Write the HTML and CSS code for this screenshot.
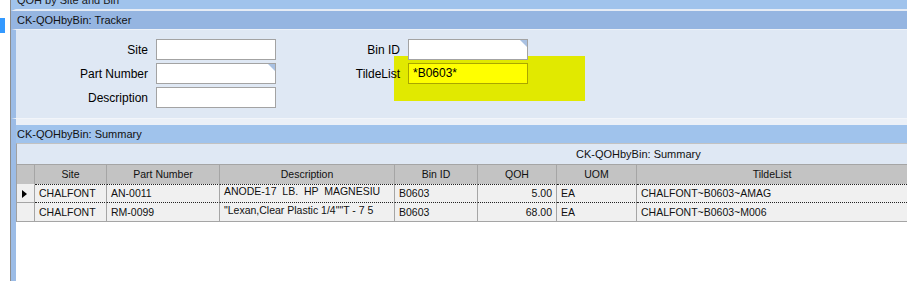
FILE: index.html
```html
<!DOCTYPE html>
<html>
<head>
<meta charset="utf-8">
<link rel="stylesheet" href="styles.css">
</head>
<body>
<div class="page">
  <div class="strip"><div class="marker"></div></div>
  <div class="window">
    <div class="titlebar"><span class="title-text">QOH by Site and Bin</span></div>
    <div class="section-head tracker-head">CK-QOHbyBin: Tracker</div>
    <div class="tracker">
      <div class="highlight"></div>
      <div class="form">
        <label class="lbl">Site</label>
        <div class="inp"></div>
        <label class="lbl">Bin ID</label>
        <div class="inp corner"></div>

        <label class="lbl">Part Number</label>
        <div class="inp corner"></div>
        <label class="lbl">TildeList</label>
        <div class="inp yellow">*B0603*</div>

        <label class="lbl">Description</label>
        <div class="inp"></div>
        <span></span>
        <span></span>
      </div>
    </div>
    <div class="band"></div>
    <div class="section-head summary-head">CK-QOHbyBin: Summary</div>
    <div class="gridwrap">
      <div class="grid-caption">CK-QOHbyBin: Summary</div>
      <div class="grid">
        <div class="hc rh"></div>
        <div class="hc">Site</div>
        <div class="hc">Part Number</div>
        <div class="hc">Description</div>
        <div class="hc">Bin ID</div>
        <div class="hc">QOH</div>
        <div class="hc">UOM</div>
        <div class="hc last">TildeList</div>

        <div class="rh sel-rh"><span class="arrow"></span></div>
        <div class="c sel">CHALFONT</div>
        <div class="c sel">AN-0011</div>
        <div class="c sel desc">ANODE-17  LB.  HP  MAGNESIU</div>
        <div class="c sel">B0603</div>
        <div class="c sel num">5.00</div>
        <div class="c sel">EA</div>
        <div class="c sel last">CHALFONT~B0603~AMAG</div>

        <div class="rh"></div>
        <div class="c">CHALFONT</div>
        <div class="c">RM-0099</div>
        <div class="c desc">"Lexan,Clear Plastic 1/4""T - 7 5</div>
        <div class="c">B0603</div>
        <div class="c num">68.00</div>
        <div class="c">EA</div>
        <div class="c last">CHALFONT~B0603~M006</div>
      </div>
    </div>
  </div>
</div>
</body>
</html>
```
FILE: styles.css
```css
html, body {
  margin: 0;
  padding: 0;
  background: #ffffff;
}
body {
  font-family: "Liberation Sans", Arial, sans-serif;
  color: #000;
  width: 907px;
  height: 281px;
  overflow: hidden;
}
.page {
  display: flex;
  height: 281px;
}
.strip {
  width: 10px;
  flex: none;
  background: #fff;
  padding-top: 18px;
  box-sizing: border-box;
}
.marker {
  width: 5px;
  height: 15px;
  background: #3399ff;
}
.window {
  flex: 1;
  border-left: 1px solid #8c8c8c;
  display: flex;
  flex-direction: column;
  position: relative;
}
.titlebar {
  height: 9px;
  background: #a0c3ec;
  overflow: hidden;
  border-left: 5px solid #a0c3ec;
  border-bottom: 2px solid #e6ecf5;
  font-size: 11px;
  line-height: 9px;
}
.title-text {
  display: block;
  margin-top: -4px;
  padding-left: 1px;
  color: #1a1a1a;
}
.section-head {
  font-size: 11px;
  color: #111;
  padding-left: 1px;
  display: flex;
  align-items: center;
}
.tracker-head {
  height: 18px;
  background: #95b5e1;
  border-left: 5px solid #95b5e1;
  border-bottom: 1px solid #edf1f7;
}
.tracker {
  position: relative;
  height: 88px;
  flex: none;
  background: #dfe8f4;
  border-left: 5px solid #9cbce6;
  box-sizing: border-box;
  padding-top: 9px;
}
.highlight {
  position: absolute;
  left: 378px;
  top: 26px;
  width: 191px;
  height: 45px;
  background: #e1e900;
  z-index: 0;
}
.form {
  position: relative;
  z-index: 1;
  display: grid;
  grid-template-columns: 132px 120px 116px 120px;
  grid-auto-rows: 21px;
  column-gap: 8px;
  row-gap: 3px;
  font-size: 12px;
}
.lbl {
  text-align: right;
  align-self: center;
  line-height: 14px;
  padding-top: 1px;
}
.inp {
  position: relative;
  background: #fff;
  border: 1px solid #a3a3a3;
  box-sizing: border-box;
  font-size: 12px;
  line-height: 19px;
  padding-left: 4px;
}
.corner::after {
  content: "";
  position: absolute;
  top: 0;
  right: 0;
  border-style: solid;
  border-width: 0 7px 7px 0;
  border-color: transparent #a9c1e2 transparent transparent;
}
.yellow {
  background: #ffff00;
  border-color: #aaa600;
}
.band {
  height: 6px;
  flex: none;
  background: #ebf0f7;
  border-left: 5px solid #9cbce6;
  border-top: 1px solid #f2f5fa;
}
.summary-head {
  height: 18px;
  flex: none;
  background: #a0c3ec;
  border-left: 5px solid #9cbce6;
}
.gridwrap {
  flex: 1;
  background: #fff;
  border-left: 5px solid #9cbce6;
  position: relative;
}
.grid-caption {
  height: 20px;
  background: #dfe8f4;
  border-top: 1px solid #c2c2c2;
  border-left: 1px solid #a0a0a0;
  font-size: 11px;
  line-height: 20px;
  padding-left: 559px;
  color: #111;
}
.grid {
  display: grid;
  grid-template-columns: 18px 72px 113px 175px 83px 79px 80px 1fr;
  grid-template-rows: 20px 19px 19px;
  border-left: 1px solid #a0a0a0;
  font-size: 10.5px;
}
.hc {
  background: #c3c3c3;
  border-right: 1px solid #a5a5a5;
  border-top: 1px solid #a5a5a5;
  text-align: center;
  line-height: 19px;
  color: #111;
}
.rh {
  background: #f0f0f0;
  border-right: 1px solid #a5a5a5;
  border-bottom: 1px solid #a5a5a5;
  display: flex;
  align-items: center;
  padding-left: 5px;
}
.hc.rh {
  background: #c3c3c3;
  border-bottom: none;
}
.arrow {
  width: 0;
  height: 0;
  border-style: solid;
  border-width: 4px 0 4px 5px;
  border-color: transparent transparent transparent #000;
}
.c {
  background: #f0f0f0;
  border-right: 1px solid #a5a5a5;
  border-bottom: 1px solid #a5a5a5;
  padding-left: 4px;
  line-height: 19px;
  white-space: pre;
  overflow: hidden;
  color: #111;
}
.c.sel {
  border-top: 1px dotted #222;
  border-bottom: 1px dotted #222;
  line-height: 17px;
}
.sel-rh {
  border-top: 1px solid #f0f0f0;
}
.c.desc {
  line-height: 15px;
}
.c.sel.desc {
  line-height: 13px;
}
.c.num {
  text-align: right;
  padding-right: 4px;
  padding-left: 0;
}
.last {
  border-right: none;
}
```
